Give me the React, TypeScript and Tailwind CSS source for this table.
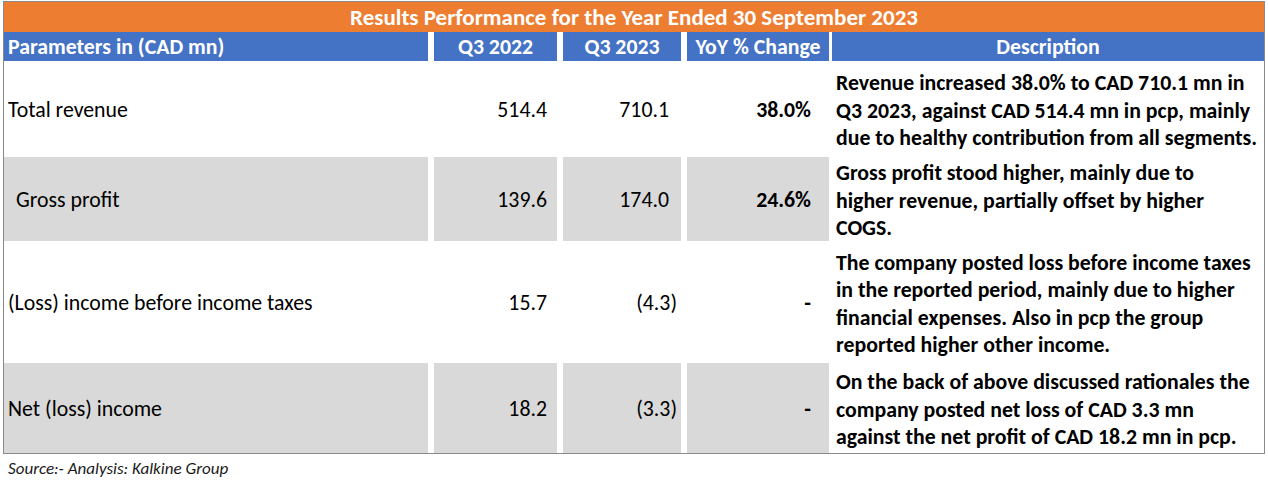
import React from "react";

type Row = {
  label: string;
  indent?: boolean;
  a: string;
  b: string;
  bNeg?: boolean;
  c: string;
  desc: string[];
  gray: boolean;
  h: string;
};

const rows: Row[] = [
  {
    label: "Total revenue",
    a: "514.4",
    b: "710.1",
    c: "38.0%",
    desc: [
      "Revenue increased 38.0% to CAD 710.1 mn in",
      "Q3 2023, against CAD 514.4 mn in pcp, mainly",
      "due to healthy contribution from all segments.",
    ],
    gray: false,
    h: "h-[96px]",
  },
  {
    label: "Gross profit",
    indent: true,
    a: "139.6",
    b: "174.0",
    c: "24.6%",
    desc: [
      "Gross profit stood higher, mainly due to",
      "higher revenue, partially offset by higher",
      "COGS.",
    ],
    gray: true,
    h: "h-[84px]",
  },
  {
    label: "(Loss) income before income taxes",
    a: "15.7",
    b: "(4.3)",
    bNeg: true,
    c: "-",
    desc: [
      "The company posted loss before income taxes",
      "in the reported period, mainly due to higher",
      "financial expenses. Also in pcp the group",
      "reported higher other income.",
    ],
    gray: false,
    h: "h-[122px]",
  },
  {
    label: "Net (loss) income",
    a: "18.2",
    b: "(3.3)",
    bNeg: true,
    c: "-",
    desc: [
      "On the back of above discussed rationales the",
      "company posted net loss of CAD 3.3 mn",
      "against the net profit of CAD 18.2 mn in pcp.",
    ],
    gray: true,
    h: "h-[90px]",
  },
];

export default function App() {
  return (
    <div className="w-[1268px] h-[486px] bg-white text-black font-[Carlito,Calibri,Lato,sans-serif] overflow-hidden">
      <div className="ml-[3px] mt-[1px] w-[1262px] border border-[#8a8a8a]">
        <div className="h-[30px] bg-[#ED7D31] flex items-center justify-center text-white font-bold text-[23px] leading-none">
          Results Performance for the Year Ended 30 September 2023
        </div>
        <div className="h-[29px] flex text-white font-bold text-[21.8px] leading-none">
          <div className="w-[424px] bg-[#4472C4] flex items-center pl-[4px]">
            Parameters in (CAD mn)
          </div>
          <div className="w-[6px]" />
          <div className="w-[123px] bg-[#4472C4] flex items-center justify-center">Q3 2022</div>
          <div className="w-[6px]" />
          <div className="w-[118px] bg-[#4472C4] flex items-center justify-center">Q3 2023</div>
          <div className="w-[6px]" />
          <div className="w-[142px] bg-[#4472C4] flex items-center justify-center">YoY % Change</div>
          <div className="w-[3px]" />
          <div className="flex-1 bg-[#4472C4] flex items-center justify-center">Description</div>
        </div>
        {rows.map((r, i) => {
          const bg = r.gray ? "bg-[#D9D9D9]" : "bg-white";
          return (
            <div key={i} className={`flex ${r.h} text-[21.8px]`}>
              <div className={`w-[424px] ${bg} flex items-center pt-[3px] ${r.indent ? "pl-[12px]" : "pl-[4px]"}`}>
                {r.label}
              </div>
              <div className="w-[6px]" />
              <div className={`w-[123px] ${bg} flex items-center justify-end pt-[3px] pr-[10px]`}>{r.a}</div>
              <div className="w-[6px]" />
              <div className={`w-[118px] ${bg} flex items-center justify-end pt-[3px] ${r.bNeg ? "pr-[4px]" : "pr-[12px]"}`}>
                {r.b}
              </div>
              <div className="w-[6px]" />
              <div className={`w-[142px] ${bg} flex items-center justify-end pt-[3px] pr-[18px] font-bold`}>{r.c}</div>
              <div className="w-[3px]" />
              <div className="flex-1 bg-white flex flex-col justify-center pt-[3px] pl-[4px] font-bold leading-[27.5px]">
                {r.desc.map((d, j) => (
                  <div key={j} className="whitespace-nowrap">
                    {d}
                  </div>
                ))}
              </div>
            </div>
          );
        })}
      </div>
      <div className="pl-[8px] pt-[6px] italic text-[17px] text-[#1a1a1a] leading-none">
        Source:- Analysis: Kalkine Group
      </div>
    </div>
  );
}
